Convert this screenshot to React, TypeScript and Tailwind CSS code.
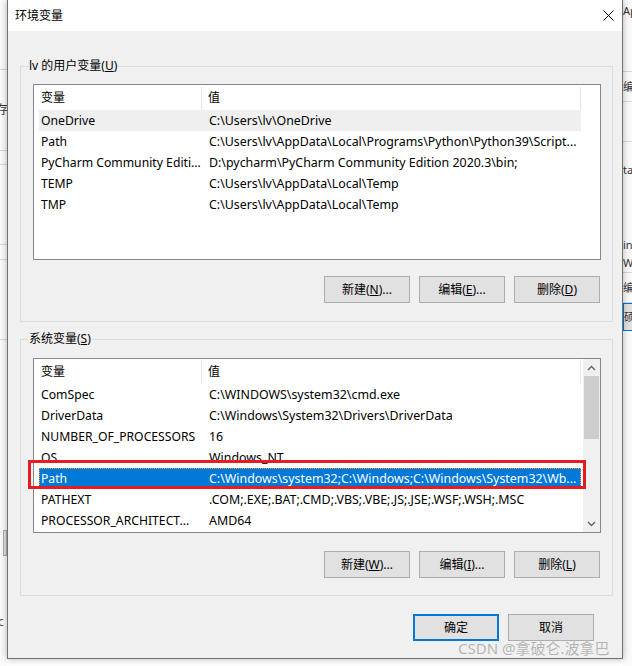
import React from "react";

const userVars = [
  { name: "OneDrive", value: "C:\\Users\\lv\\OneDrive", shaded: true },
  { name: "Path", value: "C:\\Users\\lv\\AppData\\Local\\Programs\\Python\\Python39\\Script..." },
  { name: "PyCharm Community Editi...", value: "D:\\pycharm\\PyCharm Community Edition 2020.3\\bin;" },
  { name: "TEMP", value: "C:\\Users\\lv\\AppData\\Local\\Temp" },
  { name: "TMP", value: "C:\\Users\\lv\\AppData\\Local\\Temp" },
];

const sysVars = [
  { name: "ComSpec", value: "C:\\WINDOWS\\system32\\cmd.exe" },
  { name: "DriverData", value: "C:\\Windows\\System32\\Drivers\\DriverData" },
  { name: "NUMBER_OF_PROCESSORS", value: "16" },
  { name: "OS", value: "Windows_NT" },
  { name: "Path", value: "C:\\Windows\\system32;C:\\Windows;C:\\Windows\\System32\\Wb...", selected: true },
  { name: "PATHEXT", value: ".COM;.EXE;.BAT;.CMD;.VBS;.VBE;.JS;.JSE;.WSF;.WSH;.MSC" },
  { name: "PROCESSOR_ARCHITECT...", value: "AMD64" },
];

function Header() {
  return (
    <div className="flex h-[25px] items-center ml-[5px] w-[542px] pt-[1px]">
      <div className="w-[163px] pl-[2px] h-[23px] flex items-center border-r border-[#e5e5e5]">变量</div>
      <div className="w-[379px] pl-[6px] h-[23px] flex items-center border-r border-[#e5e5e5]">值</div>
    </div>
  );
}

function Row({ name, value, selected, shaded }: any) {
  const tone = selected
    ? "bg-[#0078d7] text-white outline-1 outline-dotted outline-[#f39c35] -outline-offset-1"
    : shaded
    ? "bg-[#efefef]"
    : "";
  return (
    <div className={`flex h-[21px] items-center ml-[5px] w-[542px] ${tone}`}>
      <div className="w-[163px] pl-[2px] text-[12.2px] whitespace-nowrap">{name}</div>
      <div className="w-[379px] pl-[7px] text-[12.4px] whitespace-nowrap overflow-hidden">{value}</div>
    </div>
  );
}

function Chevron({ down }: any) {
  return (
    <svg width="9" height="6" viewBox="0 0 9 6">
      <path
        d={down ? "M1 1 L4.5 4.5 L8 1" : "M1 5 L4.5 1.5 L8 5"}
        fill="none"
        stroke="#606060"
        strokeWidth="1.3"
      />
    </svg>
  );
}

function Btn({ children, primary }: any) {
  return (
    <div
      className={`h-[27px] w-[86px] bg-[#e1e1e1] flex items-center justify-center text-[12px] ${
        primary ? "border-2 border-[#0078d7]" : "border border-[#adadad]"
      }`}
    >
      {children}
    </div>
  );
}

function Group({ label, top, children }: any) {
  return (
    <div className={`relative ml-[12px] w-[593px] border border-[#dcdcdc] ${top}`}>
      <div className="absolute -top-[9px] left-[7px] px-[1px] bg-[#f0f0f0] leading-[16px]">{label}</div>
      {children}
    </div>
  );
}

export default function App() {
  return (
    <div className="relative w-[632px] h-[666px] overflow-hidden bg-white flex text-[12px] leading-[16px] text-black font-['Noto_Sans','Noto_Sans_CJK_SC',sans-serif]">
      {/* window behind, left side */}
      <div className="w-[7px] shrink-0 flex flex-col overflow-hidden bg-[#fbfbfb]">
        <div className="h-[70px] border-b border-[#d6d6d6]" />
        <div className="h-[80px] flex items-center -ml-[4px] text-[#333]">存</div>
        <div className="h-[15px] border-t border-b border-[#d6d6d6]" />
        <div className="h-[80px] border-b border-[#d6d6d6]" />
        <div className="h-[15px] border-b border-[#d6d6d6]" />
        <div className="h-[80px] border-b border-[#d6d6d6]" />
        <div className="h-[190px]" />
        <div className="h-[26px] ml-[3px] border border-[#adadad] bg-[#e1e1e1]" />
        <div className="h-[58px]" />
        <div className="-ml-[2px] text-[#555]">c</div>
      </div>

      {/* dialog */}
      <div className="w-[616px] h-[659px] shrink-0 border-x border-b border-[#707070] bg-[#f0f0f0] flex flex-col shadow-[0_0_7px_rgba(0,0,0,0.3)] z-10">
        <div className="h-[31px] bg-white flex items-center justify-between pl-[7px] pr-[8px]">
          <span className="text-[12px]">环境变量</span>
          <svg width="11" height="11" viewBox="0 0 11 11">
            <path d="M0.5 0.5 L10.5 10.5 M10.5 0.5 L0.5 10.5" stroke="#000" strokeWidth="1" />
          </svg>
        </div>

        <Group label={<span>lv 的用户变量(<u>U</u>)</span>} top="mt-[35px] h-[256px]">
          <div className="pt-[17px] pl-[12px]">
            <div className="w-[568px] h-[176px] border border-[#828790] bg-white">
              <Header />
              {userVars.map((v) => (
                <Row key={v.name} {...v} />
              ))}
            </div>
            <div className="w-[568px] pr-[1px] mt-[16px] flex justify-end gap-[9px]">
              <Btn>新建(<u>N</u>)...</Btn>
              <Btn>编辑(<u>E</u>)...</Btn>
              <Btn>删除(<u>D</u>)</Btn>
            </div>
          </div>
        </Group>

        <Group label={<span>系统变量(<u>S</u>)</span>} top="mt-[17px] h-[257px]">
          <div className="pt-[18px] pl-[12px]">
            <div className="w-[568px] h-[175px] border border-[#828790] bg-white flex">
              <div className="w-[549px]">
                <Header />
                {sysVars.map((v) => (
                  <Row key={v.name} {...v} />
                ))}
              </div>
              <div className="w-[17px] bg-[#f0f0f0] flex flex-col">
                <div className="h-[17px] flex items-center justify-center">
                  <Chevron />
                </div>
                <div className="h-[63px] mx-[1px] bg-[#cdcdcd]" />
                <div className="flex-1" />
                <div className="h-[17px] flex items-center justify-center">
                  <Chevron down />
                </div>
              </div>
            </div>
            <div className="w-[568px] pr-[1px] mt-[18px] flex justify-end gap-[9px]">
              <Btn>新建(<u>W</u>)...</Btn>
              <Btn>编辑(<u>I</u>)...</Btn>
              <Btn>删除(<u>L</u>)</Btn>
            </div>
          </div>
        </Group>

        <div className="mt-[18px] pr-[28px] flex justify-end gap-[9px]">
          <Btn primary>确定</Btn>
          <Btn>取消</Btn>
        </div>
      </div>

      {/* window behind, right side */}
      <div className="flex-1 flex flex-col overflow-hidden bg-[#fbfbfb] text-[#333]">
        <div className="h-[22px] pt-[3px] text-[11px]">Ap</div>
        <div className="h-[50px] border-b border-[#d6d6d6]" />
        <div className="h-[30px] flex items-center text-[11px] border-b border-[#d6d6d6]">编</div>
        <div className="h-[40px] border-b border-[#d6d6d6]" />
        <div className="h-[55px] flex items-center text-[11px]">ta</div>
        <div className="h-[40px]" />
        <div className="text-[11px] h-[18px]">in</div>
        <div className="text-[11px] h-[18px] border-b border-[#d6d6d6]">W</div>
        <div className="h-[30px] flex items-center text-[11px] border-b border-[#d6d6d6]">编</div>
        <div className="h-[28px] flex items-center text-[11px] border-y border-l border-[#0078d7] bg-[#e1e1e1]">硕</div>
      </div>

      {/* annotation box */}
      <div className="absolute left-[28px] top-[460px] w-[558px] h-[29px] border-[3px] border-[#e51c23] z-20" />

      {/* watermark */}
      <div className="absolute left-[458px] top-[639px] z-20 text-[15px] leading-[18px] text-[#b3b3b3] [text-shadow:0_0_1px_#ffffff] font-['Noto_Sans','Noto_Sans_CJK_SC',sans-serif]">
        CSDN @拿破仑.波拿巴
      </div>
    </div>
  );
}
